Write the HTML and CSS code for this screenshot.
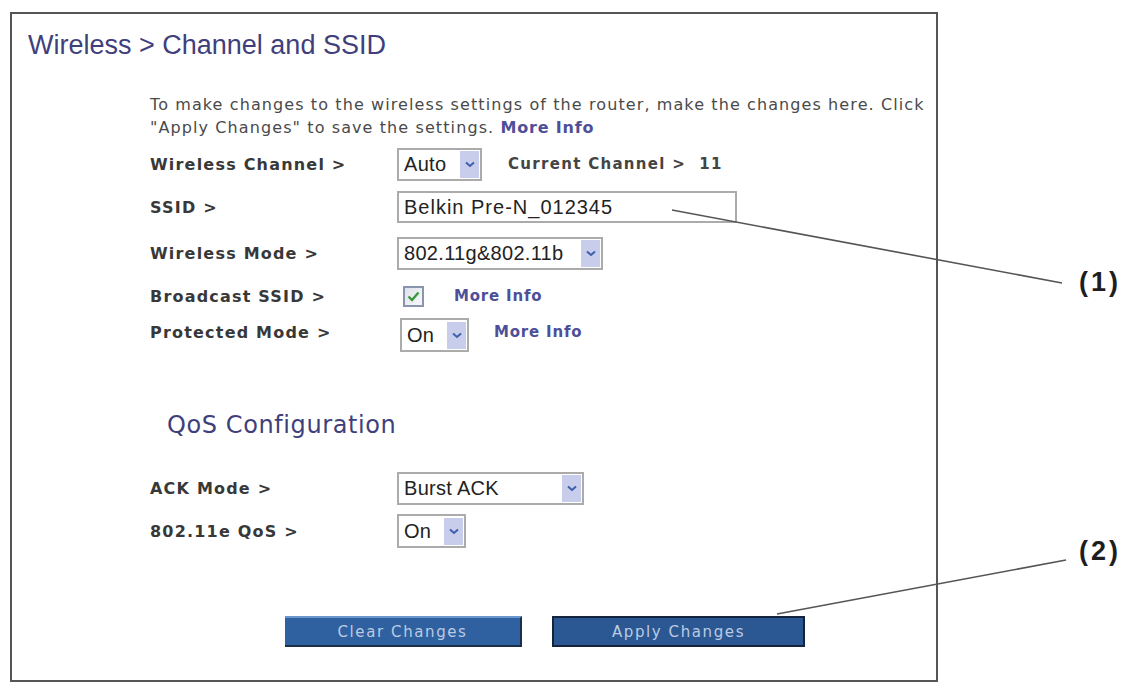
FILE: index.html
```html
<!DOCTYPE html>
<html>
<head>
<meta charset="utf-8">
<title>Wireless &gt; Channel and SSID</title>
<link rel="stylesheet" href="styles.css">
</head>
<body>
<div class="frame">
  <h1 class="title">Wireless &gt; Channel and SSID</h1>
  <div class="content">
    <p class="intro">To make changes to the wireless settings of the router, make the changes here. Click<br>"Apply Changes" to save the settings. <a class="link">More Info</a></p>
    <div class="rows">
      <div class="row">
        <span class="label">Wireless Channel &gt;</span>
        <div class="select sel-auto"><span class="val">Auto</span><span class="arrow"><svg width="10" height="7" viewBox="0 0 10 7"><path d="M1 1.5 L5 5 L9 1.5" fill="none" stroke="#3d5fae" stroke-width="2"/></svg></span></div>
        <span class="label current">Current Channel &gt;&nbsp; 11</span>
      </div>
      <div class="row">
        <span class="label">SSID &gt;</span>
        <div class="input">Belkin Pre-N_012345</div>
      </div>
      <div class="row row-mode">
        <span class="label">Wireless Mode &gt;</span>
        <div class="select sel-mode"><span class="val">802.11g&amp;802.11b</span><span class="arrow"><svg width="10" height="7" viewBox="0 0 10 7"><path d="M1 1.5 L5 5 L9 1.5" fill="none" stroke="#3d5fae" stroke-width="2"/></svg></span></div>
      </div>
      <div class="row">
        <span class="label">Broadcast SSID &gt;</span>
        <span class="checkbox"><svg width="13" height="11" viewBox="0 0 13 11"><path d="M1.5 5.5 L5 9 L11.5 1.5" fill="none" stroke="#3c9a3c" stroke-width="2.4"/></svg></span>
        <a class="link more-cb">More Info</a>
      </div>
      <div class="row row-prot">
        <span class="label label-up">Protected Mode &gt;</span>
        <div class="select sel-on sel-shift"><span class="val">On</span><span class="arrow"><svg width="10" height="7" viewBox="0 0 10 7"><path d="M1 1.5 L5 5 L9 1.5" fill="none" stroke="#3d5fae" stroke-width="2"/></svg></span></div>
        <a class="link more-pm">More Info</a>
      </div>
    </div>

    <h2 class="subhead">QoS Configuration</h2>
    <div class="rows">
      <div class="row">
        <span class="label">ACK Mode &gt;</span>
        <div class="select sel-ack"><span class="val">Burst ACK</span><span class="arrow"><svg width="10" height="7" viewBox="0 0 10 7"><path d="M1 1.5 L5 5 L9 1.5" fill="none" stroke="#3d5fae" stroke-width="2"/></svg></span></div>
      </div>
      <div class="row">
        <span class="label">802.11e QoS &gt;</span>
        <div class="select sel-on"><span class="val">On</span><span class="arrow"><svg width="10" height="7" viewBox="0 0 10 7"><path d="M1 1.5 L5 5 L9 1.5" fill="none" stroke="#3d5fae" stroke-width="2"/></svg></span></div>
      </div>
    </div>

    <div class="buttons">
      <button class="btn btn-clear">Clear Changes</button>
      <button class="btn btn-apply">Apply Changes</button>
    </div>
  </div>
</div>

<svg class="callout-lines" width="1134" height="689" viewBox="0 0 1134 689">
  <line x1="672" y1="210" x2="1062" y2="283" stroke="#555" stroke-width="1.6"/>
  <line x1="777" y1="614" x2="1066" y2="560" stroke="#555" stroke-width="1.6"/>
</svg>
<span class="callout callout-1">(1)</span>
<span class="callout callout-2">(2)</span>
</body>
</html>
```

FILE: styles.css
```css
html, body {
  margin: 0;
  padding: 0;
  background: #ffffff;
}

body {
  width: 1134px;
  height: 689px;
  position: relative;
  overflow: hidden;
  font-family: "DejaVu Sans", Verdana, sans-serif;
}

.frame {
  box-sizing: border-box;
  margin: 12px 0 0 10px;
  width: 928px;
  height: 670px;
  border: 2px solid #555555;
  padding: 15px 0 0 16px;
}

.title {
  margin: 0;
  font-family: "Liberation Sans", Arial, sans-serif;
  font-weight: normal;
  font-size: 27px;
  line-height: 32px;
  color: #3f3f7c;
}

.content {
  margin-left: 122px;
}

.intro {
  margin: 32px 0 0 0;
  font-size: 16px;
  line-height: 23px;
  letter-spacing: 1.1px;
  color: #4a4a4a;
  white-space: nowrap;
}

.link {
  color: #4f4f98;
  font-weight: bold;
  letter-spacing: 0.8px;
}

.rows {
  display: flex;
  flex-direction: column;
  margin-top: 8px;
}

.row {
  display: flex;
  align-items: center;
  height: 34px;
}

.row + .row {
  margin-top: 9px;
}

.row.row-mode {
  margin-top: 12px;
}

.row.row-prot {
  margin-top: 5px;
}

.label {
  width: 247px;
  flex: none;
  font-size: 16px;
  font-weight: bold;
  letter-spacing: 1.2px;
  color: #383838;
  white-space: nowrap;
}

.label-up {
  position: relative;
  top: -3px;
}

.label.current {
  width: auto;
  margin-left: 26px;
  font-size: 15px;
  letter-spacing: 1.3px;
  color: #444444;
}

.select, .input {
  box-sizing: border-box;
  height: 33px;
  border: 2px solid #ababab;
  background: #ffffff;
  display: flex;
  align-items: center;
  justify-content: space-between;
  font-family: "Liberation Sans", Arial, sans-serif;
  font-size: 20px;
  color: #222222;
}

.val {
  padding-left: 5px;
  letter-spacing: 0.3px;
  white-space: nowrap;
}

.arrow {
  box-sizing: border-box;
  width: 19px;
  height: 27px;
  margin-right: 1px;
  background: #c7cdea;
  display: flex;
  align-items: center;
  justify-content: center;
}

.sel-auto { width: 85px; }
.sel-mode { width: 206px; }
.sel-ack { width: 187px; }
.sel-on { width: 69px; height: 34px; }
.sel-shift { margin-left: 3px; }

.input {
  width: 340px;
  height: 32px;
  padding-left: 5px;
  justify-content: flex-start;
  letter-spacing: 1px;
}

.checkbox {
  box-sizing: border-box;
  width: 21px;
  height: 21px;
  margin-left: 6px;
  border: 2px solid #8a94ae;
  background: linear-gradient(135deg, #dfe3ea, #f7f8fa);
  display: flex;
  align-items: center;
  justify-content: center;
}

.more-cb {
  margin-left: 30px;
  font-size: 15px;
}

.more-pm {
  margin-left: 25px;
  font-size: 15px;
  position: relative;
  top: -3px;
}

.subhead {
  margin: 58px 0 0 17px;
  font-size: 24px;
  line-height: 30px;
  font-weight: normal;
  letter-spacing: 0.6px;
  color: #3f3f7c;
}

.subhead + .rows {
  margin-top: 31px;
}

.buttons {
  display: flex;
  gap: 30px;
  margin-top: 68px;
  padding-left: 135px;
}

.btn {
  box-sizing: border-box;
  height: 31px;
  font-family: "DejaVu Sans", Verdana, sans-serif;
  font-size: 15px;
  letter-spacing: 1.6px;
  color: #bccbe2;
  padding: 0;
}

.btn-clear {
  width: 237px;
  background: #2f609f;
  border: 0;
  border-top: 2px solid #6b98cc;
  border-right: 2px solid #1c2f4a;
  border-bottom: 2px solid #1c2f4a;
}

.btn-apply {
  width: 253px;
  background: #2b5892;
  border: 2px solid #14243c;
}

.callout-lines {
  position: absolute;
  left: 0;
  top: 0;
  pointer-events: none;
}

.callout {
  position: absolute;
  font-family: "Liberation Sans", Arial, sans-serif;
  font-weight: bold;
  font-size: 27px;
  line-height: 32px;
  letter-spacing: 3px;
  color: #1e1e1e;
}

.callout-1 {
  left: 1079px;
  top: 266px;
}

.callout-2 {
  left: 1079px;
  top: 535px;
}
```
